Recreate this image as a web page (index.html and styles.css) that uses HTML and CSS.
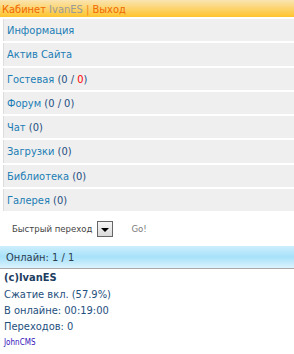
FILE: index.html
```html
<!DOCTYPE html>
<html>
  <head>
    <meta charset="utf-8">
    <title>JohnCMS</title>
    <link rel="stylesheet" href="styles.css">
  </head>
  <body>
    <div class="header">
      <a class="header__link" href="#">Кабинет</a>
      <span class="header__user">IvanES</span>
      <span class="header__sep">|</span>
      <a class="header__link" href="#">Выход</a>
    </div>

    <div class="menu"><a href="#">Информация</a></div>
    <div class="menu"><a href="#">Актив Сайта</a></div>
    <div class="menu"><a href="#">Гостевая</a> <span class="count">(0 / <span class="count--new">0</span>)</span></div>
    <div class="menu"><a href="#">Форум</a> <span class="count">(0 / 0)</span></div>
    <div class="menu"><a href="#">Чат</a> <span class="count">(0)</span></div>
    <div class="menu"><a href="#">Загрузки</a> <span class="count">(0)</span></div>
    <div class="menu"><a href="#">Библиотека</a> <span class="count">(0)</span></div>
    <div class="menu"><a href="#">Галерея</a> <span class="count">(0)</span></div>

    <form class="jump">
      <span class="jump__label">Быстрый переход</span>
      <span class="jump__select"><span class="jump__arrow"></span></span>
      <span class="jump__go">Go!</span>
    </form>

    <div class="online">Онлайн: 1 / 1</div>

    <div class="footer">
      <div class="footer__copy">(c)IvanES</div>
      <div>Сжатие вкл. (57.9%)</div>
      <div>В онлайне: 00:19:00</div>
      <div>Переходов: 0</div>
      <div class="footer__cms">JohnCMS</div>
    </div>
  </body>
</html>
```

FILE: styles.css
```css
body {
  margin: 0;
  font-family: 'DejaVu Sans', Verdana, sans-serif;
  font-stretch: condensed;
  font-size: 11px;
  color: #333333;
  background: #ffffff;
}

a {
  color: #1a7db5;
  text-decoration: none;
}

.header {
  height: 14px;
  line-height: 14px;
  padding: 3px 2px 0;
  margin-bottom: 2px;
  background: linear-gradient(to bottom, #fae4b0, #ffc42c);
}

.header__link {
  color: #f06800;
}

.header__user {
  color: #9a9a9a;
}

.header__sep {
  color: #f08a1a;
}

.menu {
  margin: 0 0 2px 3px;
  padding: 2px 3px 0;
  height: 20.3px;
  line-height: 20.3px;
  background: #efefef;
  border-left: 1px solid #dddddd;
}

.count {
  color: #1e4e80;
}

.count--new {
  color: #ff0000;
}

.jump {
  margin: 0;
  padding: 8px 0 0 12px;
  height: 24px;
  display: flex;
  align-items: flex-start;
  font-size: 9.5px;
  color: #444444;
}

.jump__label {
  margin-top: 2px;
  margin-right: 5px;
}

.jump__select {
  width: 14px;
  height: 14px;
  border: 1px solid #666666;
  background: linear-gradient(to bottom, #f6f6f6, #dadada);
  display: flex;
  align-items: center;
  justify-content: center;
}

.jump__arrow {
  width: 0;
  height: 0;
  margin-top: 1px;
  border-left: 4px solid transparent;
  border-right: 4px solid transparent;
  border-top: 4px solid #000000;
}

.jump__go {
  margin: 2px 0 0 18px;
  color: #7a7a7a;
}

.online {
  margin-top: 1px;
  height: 22px;
  line-height: 23px;
  padding-left: 6px;
  background: linear-gradient(to bottom, #cdeefc, #a7e1fa 50%, #dcf3fd);
  border-bottom: 1px solid #a8a8a8;
  color: #2c3e50;
}

.footer {
  padding: 1px 4px 0;
  color: #24507e;
  line-height: 16.2px;
}

.footer__copy {
  font-weight: bold;
  color: #1c3c60;
}

.footer__cms {
  font-size: 8px;
  color: #3311bb;
}
```
